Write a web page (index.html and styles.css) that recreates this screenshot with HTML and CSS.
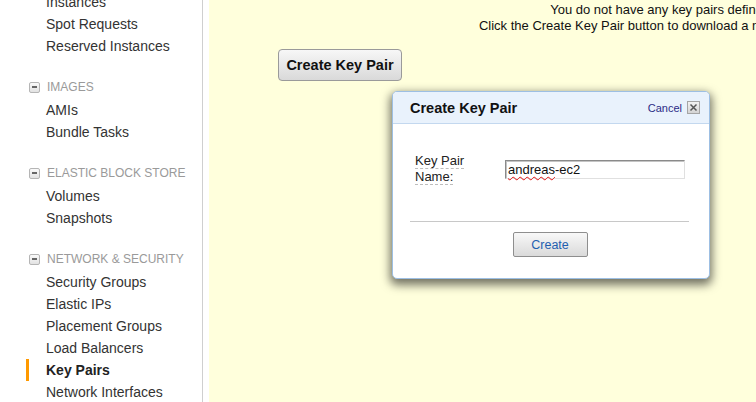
FILE: index.html
```html
<!DOCTYPE html>
<html>
<head>
<meta charset="utf-8">
<link rel="stylesheet" href="styles.css">
</head>
<body>
<div class="page">
  <nav class="sidebar">
    <ul class="nav">
      <li class="item">Instances</li>
      <li class="item">Spot Requests</li>
      <li class="item">Reserved Instances</li>
      <li class="group"><span class="toggle"></span>IMAGES</li>
      <li class="item">AMIs</li>
      <li class="item">Bundle Tasks</li>
      <li class="group"><span class="toggle"></span>ELASTIC BLOCK STORE</li>
      <li class="item">Volumes</li>
      <li class="item">Snapshots</li>
      <li class="group"><span class="toggle"></span>NETWORK &amp; SECURITY</li>
      <li class="item">Security Groups</li>
      <li class="item">Elastic IPs</li>
      <li class="item">Placement Groups</li>
      <li class="item">Load Balancers</li>
      <li class="item active">Key Pairs</li>
      <li class="item">Network Interfaces</li>
    </ul>
  </nav>
  <div class="content">
    <main class="main">
      <p class="message">You do not have any key pairs defined.<br>Click the Create Key Pair button to download a new private key.</p>
      <div class="actions">
        <button class="btn-primary">Create Key Pair</button>
      </div>
    </main>
  </div>
</div>

<div class="modal">
  <div class="modal-head">
    <span class="modal-title">Create Key Pair</span>
    <span class="modal-close">
      <span class="cancel">Cancel</span>
      <span class="xbox"><svg width="9" height="9" viewBox="0 0 9 9"><path d="M1.5 1.5 L7.5 7.5 M7.5 1.5 L1.5 7.5" stroke="#555" stroke-width="1.5" fill="none"/></svg></span>
    </span>
  </div>
  <div class="modal-body">
    <div class="form-row">
      <label class="label"><span class="term">Key Pair</span> <span class="term">Name:</span></label>
      <div class="field"><span class="misspelled">andreas</span>-ec2</div>
    </div>
    <div class="divider"></div>
    <div class="modal-foot">
      <button class="btn-create">Create</button>
    </div>
  </div>
</div>
</body>
</html>
```

FILE: styles.css
```css
html, body {
  margin: 0;
  padding: 0;
  height: 100%;
  overflow: hidden;
}
body {
  font-family: "Liberation Sans", Arial, sans-serif;
  color: #333;
  background: #fff;
}
.page {
  display: flex;
  height: 100%;
}
.sidebar {
  flex: none;
  width: 202px;
  border-right: 1px solid #cfcfcf;
  background: #fff;
  overflow: hidden;
}
.nav {
  list-style: none;
  margin: -9px 0 0 0;
  padding: 0;
}
.item {
  font-size: 14px;
  line-height: 22px;
  height: 22px;
  padding-left: 46px;
  color: #333;
  white-space: nowrap;
}
.item.active {
  margin-left: 26px;
  padding-left: 17px;
  border-left: 3px solid #ff9900;
  font-weight: bold;
  color: #222;
}
.group {
  display: flex;
  align-items: center;
  gap: 7px;
  margin-top: 18px;
  height: 24px;
  padding-left: 29px;
  font-size: 12px;
  color: #9a9a9a;
  white-space: nowrap;
}
.toggle {
  flex: none;
  width: 9px;
  height: 9px;
  border: 1px solid #b5b5b5;
  border-radius: 2px;
  background: linear-gradient(#fafafa, #e2e2e2);
  display: flex;
  align-items: center;
  justify-content: center;
}
.toggle::after {
  content: "";
  width: 5px;
  height: 2px;
  background: #666;
}
.content {
  flex: none;
  padding-left: 6px;
  background: #fff;
}
.main {
  width: 906px;
  height: 100%;
  background: #ffffdc;
  padding-top: 2px;
  box-sizing: border-box;
}
.message {
  margin: 0;
  text-align: center;
  font-size: 13px;
  line-height: 16px;
  color: #111;
}
.actions {
  padding-left: 69px;
  margin-top: 15px;
}
.btn-primary {
  width: 124px;
  height: 32px;
  border: 1px solid #9a9a9a;
  border-radius: 4px;
  background: linear-gradient(#f7f7f7, #d9d9d9);
  font-family: "Liberation Sans", Arial, sans-serif;
  font-size: 14.5px;
  font-weight: bold;
  color: #111;
  padding: 0;
}
.modal {
  position: absolute;
  left: 392px;
  top: 91px;
  width: 316px;
  background: #fff;
  border: 1px solid #9dbfe3;
  border-radius: 5px;
  box-shadow: 0 4px 10px 2px rgba(0, 0, 0, 0.55);
  overflow: hidden;
}
.modal-head {
  height: 31px;
  display: flex;
  align-items: center;
  justify-content: space-between;
  padding: 0 9px 0 17px;
  background: #e9f2fc;
  border-bottom: 1px solid #c3d8ef;
}
.modal-title {
  font-size: 14.5px;
  font-weight: bold;
  color: #111;
}
.modal-close {
  display: flex;
  align-items: center;
  gap: 5px;
}
.cancel {
  font-size: 11px;
  color: #2c2c86;
}
.xbox {
  width: 11px;
  height: 11px;
  border: 1px solid #a5a5a5;
  background: linear-gradient(#f2f2f2, #d4d4d4);
  display: flex;
  align-items: center;
  justify-content: center;
}
.modal-body {
  padding: 29px 19px 21px 17px;
}
.form-row {
  display: flex;
  align-items: flex-start;
  padding-left: 5px;
  height: 33px;
}
.label {
  width: 60px;
  margin-right: 30px;
  font-size: 13px;
  line-height: 16px;
  color: #222;
}
.term {
  border-bottom: 1px dashed #bdbdbd;
}
.field {
  margin-top: 7px;
  width: 176px;
  height: 17px;
  border: 1px solid;
  border-color: #8a8a8a #e0e0e0 #e0e0e0 #8a8a8a;
  box-shadow: inset 1px 1px 0 #c4c4c4;
  padding: 0 0 0 2px;
  font-size: 13px;
  line-height: 17px;
  color: #111;
  background: #fff;
}
.misspelled {
  text-decoration: underline wavy #e01010;
  text-decoration-thickness: 1px;
  text-underline-offset: 2px;
}
.divider {
  margin-top: 35px;
  margin-right: 1px;
  border-top: 1px solid #c8c8c8;
}
.modal-foot {
  display: flex;
  justify-content: center;
  padding-top: 10px;
}
.btn-create {
  width: 75px;
  height: 25px;
  border: 1px solid #8e8e8e;
  border-radius: 2px;
  background: linear-gradient(#f8f8f8, #dadada);
  font-family: "Liberation Sans", Arial, sans-serif;
  font-size: 12.5px;
  color: #1f5fb0;
  padding: 0;
}
```
